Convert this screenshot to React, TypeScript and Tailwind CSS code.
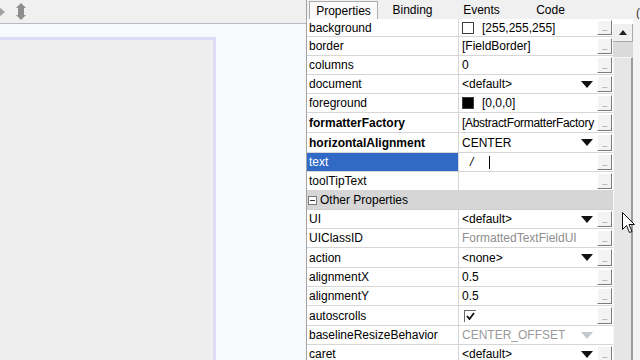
import type { ReactNode } from 'react'

type Row = {
  name: string
  h: string
  bold?: boolean
  selected?: boolean
  group?: boolean
  value?: ReactNode
  dropdown?: boolean
  dimDropdown?: boolean
  noButton?: boolean
}

function Swatch({ color }: { color: string }) {
  return <span className={`mr-[8px] inline-block h-[12px] w-[12px] border border-[#3c3c3c] ${color}`} />
}

function Arrow({ dim }: { dim?: boolean }) {
  return (
    <svg width="12" height="7" viewBox="0 0 12 7" className="ml-auto shrink-0">
      <polygon points="0,0 12,0 6,7" fill={dim ? '#c4c8d0' : '#111'} />
    </svg>
  )
}

const rows: Row[] = [
  { name: 'background', h: 'h-[18px]', value: <><Swatch color="bg-white" />[255,255,255]</> },
  { name: 'border', h: 'h-[19px]', value: '[FieldBorder]' },
  { name: 'columns', h: 'h-[19px]', value: '0' },
  { name: 'document', h: 'h-[19px]', value: '<default>', dropdown: true },
  { name: 'foreground', h: 'h-[19px]', value: <><Swatch color="bg-black" />[0,0,0]</> },
  {
    name: 'formatterFactory',
    h: 'h-[20px]',
    bold: true,
    value: <span className="block tracking-[-0.3px]">[AbstractFormatterFactory</span>,
  },
  { name: 'horizontalAlignment', h: 'h-[20px]', bold: true, value: 'CENTER', dropdown: true },
  {
    name: 'text',
    h: 'h-[19px]',
    selected: true,
    value: (
      <>
        <span className="ml-[8px] italic">/</span>
        <span className="ml-[16px] inline-block h-[13px] w-[1px] bg-black" />
      </>
    ),
  },
  { name: 'toolTipText', h: 'h-[19px]' },
  { name: 'Other Properties', h: 'h-[19px]', group: true },
  { name: 'UI', h: 'h-[19px]', value: '<default>', dropdown: true },
  { name: 'UIClassID', h: 'h-[19px]', value: <span className="text-[#8e8e8e]">FormattedTextFieldUI</span> },
  { name: 'action', h: 'h-[20px]', value: '<none>', dropdown: true },
  { name: 'alignmentX', h: 'h-[19px]', value: '0.5' },
  { name: 'alignmentY', h: 'h-[19px]', value: '0.5' },
  {
    name: 'autoscrolls',
    h: 'h-[20px]',
    value: (
      <span className="ml-[2px] flex h-[12px] w-[12px] items-center justify-center border-t border-l border-[#6a6a6a] bg-white">
        <svg width="9" height="8" viewBox="0 0 9 8">
          <polyline points="1,4 3.5,7 8,1" fill="none" stroke="#111" strokeWidth="1.8" />
        </svg>
      </span>
    ),
  },
  {
    name: 'baselineResizeBehavior',
    h: 'h-[19px]',
    value: <span className="text-[#9a9a9a]">CENTER_OFFSET</span>,
    dropdown: true,
    dimDropdown: true,
    noButton: true,
  },
  { name: 'caret', h: 'h-[19px]', value: '<default>', dropdown: true },
]

function DotsButton() {
  return (
    <div className="flex h-full w-[15px] items-end justify-center border border-t-white border-l-white border-r-[#7c7c7c] border-b-[#7c7c7c] bg-[#f3f3f3] pb-[1px] text-[8px] leading-[8px] tracking-[-0.5px] text-[#5a6080]">
      ...
    </div>
  )
}

function PropRow({ row }: { row: Row }) {
  if (row.group) {
    return (
      <div className={`flex ${row.h} items-center border-b border-[#cfcfcf] bg-[#d6d6d6] pl-[1px]`}>
        <span className="mr-[3px] flex h-[9px] w-[9px] items-center justify-center border border-[#7a7a7a] bg-white">
          <span className="h-[1px] w-[5px] bg-[#333]" />
        </span>
        {row.name}
      </div>
    )
  }
  return (
    <div className={`flex ${row.h}`}>
      <div
        className={`flex w-[152px] items-center border-r border-b border-[#d6d6d6] pl-[2px] ${
          row.selected ? 'bg-[#3169c6] text-white' : ''
        } ${row.bold ? 'font-bold' : ''}`}
      >
        {row.name}
      </div>
      <div className="flex w-[138px] items-center overflow-hidden whitespace-nowrap border-b border-[#d6d6d6] pr-[4px] pl-[3px]">
        {row.value}
        {row.dropdown && <Arrow dim={row.dimDropdown} />}
      </div>
      <div className="w-[16px] border-b border-[#d6d6d6] py-[1px]">{!row.noButton && <DotsButton />}</div>
    </div>
  )
}

export default function App() {
  return (
    <div className="relative flex h-[360px] w-[640px] overflow-hidden bg-white font-['Liberation_Sans',Arial,sans-serif] text-[12px] text-black">
      <div className="flex w-[306px] flex-col">
        <div className="flex h-[24px] shrink-0 items-center gap-[9px] border-b border-[#b3bac2] bg-[#f0f0f0]">
          <svg width="7" height="12" viewBox="0 0 7 12" className="-ml-[1px]">
            <polygon points="0,1 6,6 0,11" fill="#a2a2a2" />
          </svg>
          <svg width="12" height="17" viewBox="0 0 12 17">
            <polygon points="6,0 11,5 1,5" fill="#8e8e8e" />
            <rect x="3" y="5" width="6" height="7" fill="#8e8e8e" />
            <polygon points="1,12 11,12 6,17" fill="#8e8e8e" />
          </svg>
        </div>
        <div className="flex-1 bg-[#f8f9fd] pt-[13px]">
          <div className="h-full w-[216px] border-t-[3px] border-r-[3px] border-[#dedcf5] bg-[#efeeef]" />
        </div>
      </div>

      <div className="flex w-[334px] flex-col border-l border-[#a4a4a4] bg-[#f0f0f0]">
        <div className="flex h-[19px] shrink-0 items-end pl-[2px]">
          {['Properties', 'Binding', 'Events', 'Code'].map((t, i) => (
            <div
              key={t}
              className={`flex h-[18px] w-[69px] items-center justify-center ${
                i === 0 ? 'border border-b-0 border-[#acacac] bg-[#fafafa]' : ''
              }`}
            >
              {t}
            </div>
          ))}
          <span className="ml-auto self-start pt-[4px] text-[#333]">(</span>
        </div>
        <div className="flex flex-1">
          <div className="w-[306px] bg-white">
            {rows.map((r) => (
              <PropRow key={r.name} row={r} />
            ))}
          </div>
          <div className="flex w-[20px] flex-col bg-white pt-[5px]">
            <div className="flex h-[18px] items-center justify-center border-r border-b border-[#a8a8a8] bg-[#f0f0f0]">
              <svg width="8" height="5" viewBox="0 0 8 5">
                <polygon points="0,5 8,5 4,0" fill="#222" />
              </svg>
            </div>
            <div className="h-[15px] bg-[#dadada]" />
            <div className="flex-1 border-t border-l border-t-[#f6f6f6] border-l-[#f6f6f6] border-r-2 border-r-[#9c9c9c] bg-[#e6e6e6]" />
          </div>
          <div className="w-[7px] bg-[#f4f4f4]" />
        </div>
      </div>

      <svg width="13" height="22" viewBox="0 0 13 22" className="absolute top-[212px] left-[622px]">
        <path d="M0.5 0.5 L0.5 17.5 L4.5 13.5 L7.5 20.5 L10 19.5 L7 12.5 L12.5 12.5 Z" fill="#fff" stroke="#111" strokeWidth="1" />
      </svg>
    </div>
  )
}
